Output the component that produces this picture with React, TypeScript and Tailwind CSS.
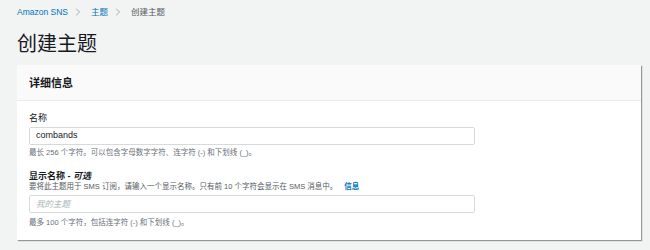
import { ChevronRight } from "lucide-react";

export default function App() {
  const font = { fontFamily: '"Liberation Sans", "Noto Sans CJK SC", sans-serif' };
  return (
    <div
      className="w-[650px] h-[250px] overflow-hidden bg-[#f2f3f3] text-[#16191f] pl-[17px] pr-[9px]"
      style={font}
    >
      <nav className="flex items-center h-[24px] text-[8.5px] leading-[12px] text-[#545b64]">
        <span className="text-[#0073bb]">Amazon SNS</span>
        <ChevronRight className="ml-[4px] mr-[7px] text-[#879596]" size={12} strokeWidth={1.5} />
        <span className="text-[#0073bb]">主题</span>
        <ChevronRight className="ml-[4px] mr-[7px] text-[#879596]" size={12} strokeWidth={1.5} />
        <span>创建主题</span>
      </nav>
      <h1 className="text-[20px] leading-[28px] mt-[6px] font-normal">创建主题</h1>
      <section className="mt-[7px] bg-white shadow-[1px_1px_1px_0_rgba(0,28,36,0.3),_1px_1px_1px_0_rgba(0,28,36,0.15)]">
        <header className="h-[36px] flex items-center px-[12px] bg-[#fafafa] border-b border-[#eaeded]">
          <h2 className="text-[11px] font-bold leading-[14px]">详细信息</h2>
        </header>
        <div className="px-[12px] pt-[10px] pb-[11px]">
          <label className="block text-[9px] leading-[14px]">名称</label>
          <div className="mt-[2px] w-[446px] h-[18px] border border-[#d5dbdb] rounded-[2px] flex items-center px-[6px] text-[9px]">
            combands
          </div>
          <p className="mt-[2px] text-[7.5px] leading-[12px] text-[#687078]">
            最长 256 个字符。可以包含字母数字字符、连字符 (-) 和下划线 (_)。
          </p>
          <label className="block mt-[11px] text-[9px] leading-[12px] font-bold">
            显示名称 - <i>可选</i>
          </label>
          <p className="text-[7.5px] leading-[10px] text-[#545b64]">
            要将此主题用于 SMS 订阅，请输入一个显示名称。只有前 10 个字符会显示在 SMS 消息中。
            <span className="ml-[7px] font-bold text-[#0073bb]">信息</span>
          </p>
          <div className="mt-[3px] w-[446px] h-[18px] border border-[#d5dbdb] rounded-[2px] flex items-center px-[6px] text-[8.5px] italic text-[#aab7b8]">
            我的主题
          </div>
          <p className="mt-[4px] text-[7.5px] leading-[12px] text-[#687078]">
            最多 100 个字符，包括连字符 (-) 和下划线 (_)。
          </p>
        </div>
      </section>
    </div>
  );
}
